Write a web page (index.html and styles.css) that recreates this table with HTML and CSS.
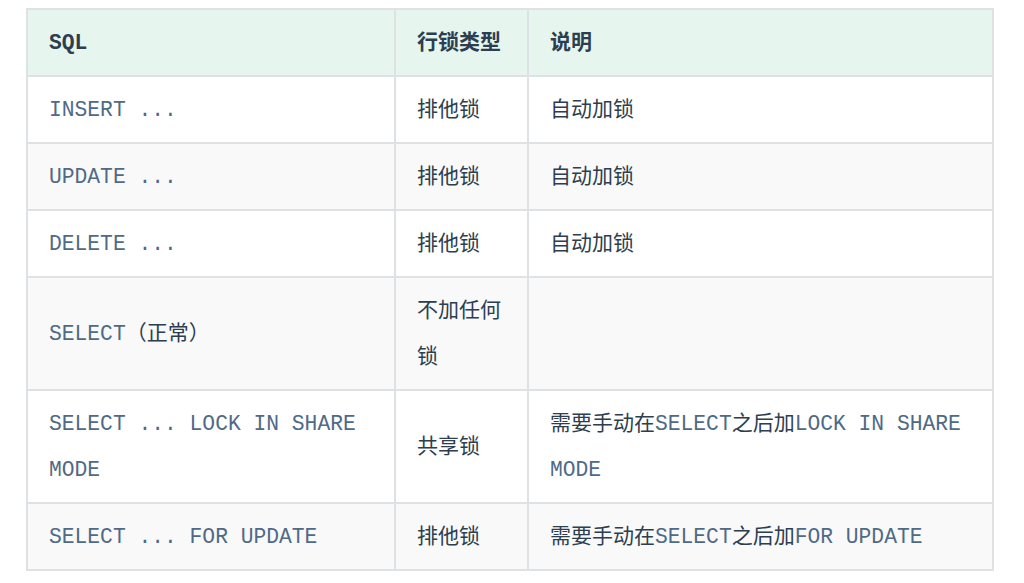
FILE: index.html
```html
<!DOCTYPE html>
<html lang="zh-CN">
<head>
<meta charset="utf-8">
<link rel="stylesheet" href="styles.css">
</head>
<body>
<table class="lock-table">
  <colgroup>
    <col class="c1"><col class="c2"><col class="c3">
  </colgroup>
  <thead>
    <tr><th><code>SQL</code></th><th>行锁类型</th><th>说明</th></tr>
  </thead>
  <tbody>
    <tr><td><code>INSERT ...</code></td><td>排他锁</td><td>自动加锁</td></tr>
    <tr><td><code>UPDATE ...</code></td><td>排他锁</td><td>自动加锁</td></tr>
    <tr><td><code>DELETE ...</code></td><td>排他锁</td><td>自动加锁</td></tr>
    <tr><td><code>SELECT</code>（正常）</td><td>不加任何锁</td><td></td></tr>
    <tr><td><code>SELECT ... LOCK IN SHARE MODE</code></td><td>共享锁</td><td>需要手动在<code>SELECT</code>之后加<code>LOCK IN SHARE MODE</code></td></tr>
    <tr><td><code>SELECT ... FOR UPDATE</code></td><td>排他锁</td><td>需要手动在<code>SELECT</code>之后加<code>FOR UPDATE</code></td></tr>
  </tbody>
</table>
</body>
</html>
```
FILE: styles.css
```css
html, body {
  margin: 0;
  padding: 0;
  background: #ffffff;
}
body {
  padding: 8px 0 0 26px;
  font-family: "Noto Sans CJK SC", "Noto Sans", sans-serif;
  color: #2c3e50;
  font-size: 21px;
}
.lock-table {
  border-collapse: collapse;
  table-layout: fixed;
  width: 966px;
}
.c1 { width: 368px; }
.c2 { width: 133px; }
.c3 { width: 465px; }
.lock-table th,
.lock-table td {
  border: 2px solid #dfe2e5;
  padding: 7px 21px 12px;
  line-height: 46px;
  text-align: left;
  vertical-align: middle;
}
.lock-table th {
  font-weight: 700;
  background: #e6f6ef;
  color: #2c3e50;
}
.lock-table tbody tr:nth-child(even) {
  background: #f9f9f9;
}
.lock-table code {
  font-family: "Liberation Mono", "Courier New", monospace;
  font-size: 21.3px;
  line-height: 1;
  color: #4f6a86;
}
.lock-table th code {
  color: #2c3e50;
  font-weight: 700;
}
```
